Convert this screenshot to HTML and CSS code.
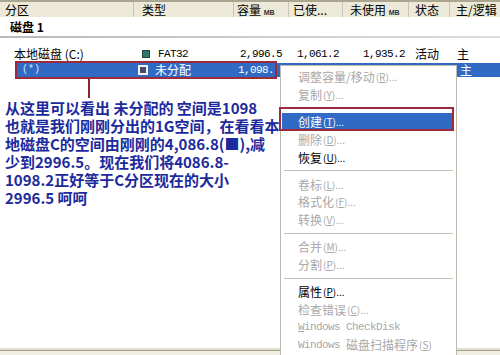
FILE: index.html
```html
<!DOCTYPE html>
<html lang="zh-CN">
<head>
<meta charset="utf-8">
<title>磁盘管理</title>
<link rel="stylesheet" href="styles.css">
</head>
<body>
<div class="window">
  <div class="header">
    <div class="hc c1">分区</div>
    <div class="hc c2">类型</div>
    <div class="hc c3">容量 <span class="unit">MB</span></div>
    <div class="hc c4">已使...</div>
    <div class="hc c5">未使用 <span class="unit">MB</span></div>
    <div class="hc c6">状态</div>
    <div class="hc c7">主/逻辑</div>
  </div>
  <div class="disk">磁盘 1</div>
  <div class="rule"></div>
  <div class="row r1">
    <div class="c1 name">本地磁盘 (C:)</div>
    <div class="c2 type"><span class="ico fat"></span><span class="mono">FAT32</span></div>
    <div class="c3 mono num3">2,996.5</div>
    <div class="c4 mono num4">1,061.2</div>
    <div class="c5 mono num5">1,935.2</div>
    <div class="c6 st">活动</div>
    <div class="c7 pl">主</div>
  </div>
  <div class="row sel">
    <div class="c1s name">(*)</div>
    <div class="c2 type"><span class="ico un"></span><span>未分配</span></div>
    <div class="c3 mono num3s">1,098.</div>
    <div class="c4"></div>
    <div class="c5"></div>
    <div class="c6"></div>
    <div class="c7 pls">主</div>
    <div class="redbox"></div>
  </div>
  <div class="connector"></div>
  <div class="note">
    <div class="ln">从这里可以看出 未分配的 空间是1098</div>
    <div class="ln">也就是我们刚刚分出的1G空间，在看看本</div>
    <div class="ln">地磁盘C的空间由刚刚的4,086.8(■),减</div>
    <div class="ln">少到2996.5。现在我们将4086.8-</div>
    <div class="ln">1098.2正好等于C分区现在的大小</div>
    <div class="ln">2996.5 呵呵</div>
  </div>
  <div class="bottom"></div>

  <div class="menu">
    <div class="item dis">调整容量/移动<span class="k">(<u>R</u>)...</span></div>
    <div class="item dis">复制<span class="k">(<u>Y</u>)...</span></div>
    <div class="sep"></div>
    <div class="item hot">创建<span class="k">(<u>T</u>)...</span></div>
    <div class="item dis">删除<span class="k">(<u>D</u>)...</span></div>
    <div class="item">恢复<span class="k">(<u>U</u>)...</span></div>
    <div class="sep"></div>
    <div class="item dis">卷标<span class="k">(<u>L</u>)...</span></div>
    <div class="item dis">格式化<span class="k">(<u>F</u>)...</span></div>
    <div class="item dis">转换<span class="k">(<u>V</u>)...</span></div>
    <div class="sep"></div>
    <div class="item dis">合并<span class="k">(<u>M</u>)...</span></div>
    <div class="item dis">分割<span class="k">(<u>P</u>)...</span></div>
    <div class="sep"></div>
    <div class="item">属性<span class="k">(<u>P</u>)...</span></div>
    <div class="item dis">检查错误<span class="k">(<u>C</u>)...</span></div>
    <div class="item dis"><span class="mono"><u>W</u>indows CheckDisk</span></div>
    <div class="item dis"><span class="mono">Windows&nbsp;</span>磁盘扫描程序<span class="k">(<u>S</u>)</span></div>
    <div class="menubox"></div>
  </div>
</div>
</body>
</html>
```

FILE: styles.css
```css
html, body {
  margin: 0;
  padding: 0;
}
body {
  width: 500px;
  height: 355px;
  overflow: hidden;
  background: #ffffff;
  font-family: "Noto Sans CJK SC", "Liberation Sans", sans-serif;
  font-size: 12px;
  color: #000;
}
.window {
  position: relative;
  height: 355px;
  display: flex;
  flex-direction: column;
}
.header {
  display: flex;
  height: 15px;
  border-top: 2px solid #aaa690;
  background: #ece9d8;
  line-height: 15px;
  white-space: nowrap;
}
.hc {
  box-sizing: border-box;
  height: 15px;
  border-right: 1px solid #c9c5b4;
}
.header .c1 { padding-left: 5px; }
.header .c2 { padding-left: 8px; }
.header .c3 { padding-left: 3px; }
.header .c4 { padding-left: 4px; }
.header .c5 { padding-left: 7px; }
.header .c6 { padding-left: 6px; }
.header .c7 { padding-left: 6px; border-right: none; }
.unit {
  font-family: "Liberation Sans", sans-serif;
  font-size: 7px;
  font-weight: bold;
  color: #333;
}
.c1 { width: 134px; flex: none; box-sizing: border-box; }
.c1s { width: 117px; flex: none; box-sizing: border-box; }
.c2 { width: 100px; flex: none; box-sizing: border-box; }
.c3 { width: 55px; flex: none; box-sizing: border-box; }
.c4 { width: 54px; flex: none; box-sizing: border-box; }
.c5 { width: 66px; flex: none; box-sizing: border-box; }
.c6 { width: 41px; flex: none; box-sizing: border-box; }
.c7 { flex: 1; box-sizing: border-box; }

.disk {
  height: 19px;
  line-height: 19px;
  padding-left: 10px;
  font-weight: bold;
  font-size: 12px;
}
.rule {
  height: 2px;
  background: linear-gradient(to right, #b8b8b8, #d0d0d0 60%, #dcdcdc);
  margin-bottom: 8px;
}
.row {
  display: flex;
  height: 16px;
  line-height: 16px;
  white-space: nowrap;
}
.mono {
  font-family: "Liberation Mono", monospace;
  font-size: 11px;
  letter-spacing: -0.6px;
}
.r1 .name { padding-left: 14px; }
.type {
  display: flex;
  align-items: center;
  padding-left: 8px;
  gap: 8px;
}
.ico {
  display: inline-block;
  flex: none;
}
.fat {
  width: 6px;
  height: 6px;
  background: #2e7a66;
  border: 1px solid #1d4a3e;
}
.un {
  width: 6px;
  height: 6px;
  background: #4a4a6a;
  border: 2px solid #f4f4f4;
  margin-left: -2px;
}
.num3 { padding-left: 6px; }
.num4 { padding-left: 8px; }
.num5 { padding-left: 20px; }
.st { padding-left: 6px; }
.pl { padding-left: 7px; }

.sel {
  position: relative;
  margin-left: 17px;
  margin-top: 1px;
  height: 14px;
  line-height: 14px;
  background: #316ac5;
  color: #ffffff;
}
.sel .name {
  padding-left: 5px;
  color: #d8e2ff;
  font-family: "Liberation Mono", monospace;
  font-size: 10px;
}
.sel .type { padding-left: 6px; gap: 7px; }
.num3s { padding-left: 4px; }
.pls { padding-left: 10px; }
.redbox {
  position: absolute;
  left: -2px;
  top: -2px;
  width: 262px;
  height: 18px;
  box-sizing: border-box;
  border: 2px solid #9b2a3c;
}
.connector {
  margin-left: 88px;
  margin-top: 2px;
  width: 2px;
  height: 19px;
  background: #8a2434;
}
.note {
  margin-top: 1px;
  padding-left: 5px;
  font-size: 15px;
  font-weight: bold;
  color: #1c2a9c;
  white-space: nowrap;
  display: flex;
  flex-direction: column;
}
.ln {
  height: 18px;
  line-height: 18px;
}
.bottom {
  margin-top: auto;
  height: 7px;
  background: linear-gradient(to bottom, #e4e1cf 0, #e4e1cf 2px, #a09e8e 2px, #a09e8e 3px, #f1efe3 3px);
}

.menu {
  position: absolute;
  left: 280px;
  top: 65px;
  width: 177px;
  bottom: 0;
  box-sizing: border-box;
  background: #ffffff;
  border: 1px solid #bdbab0;
  border-bottom: none;
  padding-top: 2px;
}
.item {
  height: 17.7px;
  display: flex;
  align-items: center;
  padding-left: 17px;
  white-space: nowrap;
  font-size: 12px;
  color: #000;
}
.item.dis { color: #a8a8a8; }
.item.hot {
  background: #316ac5;
  color: #ffffff;
  margin: 0 3px 0 1px;
  padding-left: 16px;
}
.k {
  font-size: 10px;
  margin-left: 1px;
}
.sep {
  height: 9.5px;
  display: flex;
  align-items: center;
  padding: 0 3px;
}
.sep::before {
  content: "";
  display: block;
  flex: 1;
  height: 1px;
  background: #c2c0b8;
}
.menubox {
  position: absolute;
  left: -2px;
  top: 41px;
  width: 175px;
  height: 24px;
  box-sizing: border-box;
  border: 2px solid #9b2a3c;
}
```
